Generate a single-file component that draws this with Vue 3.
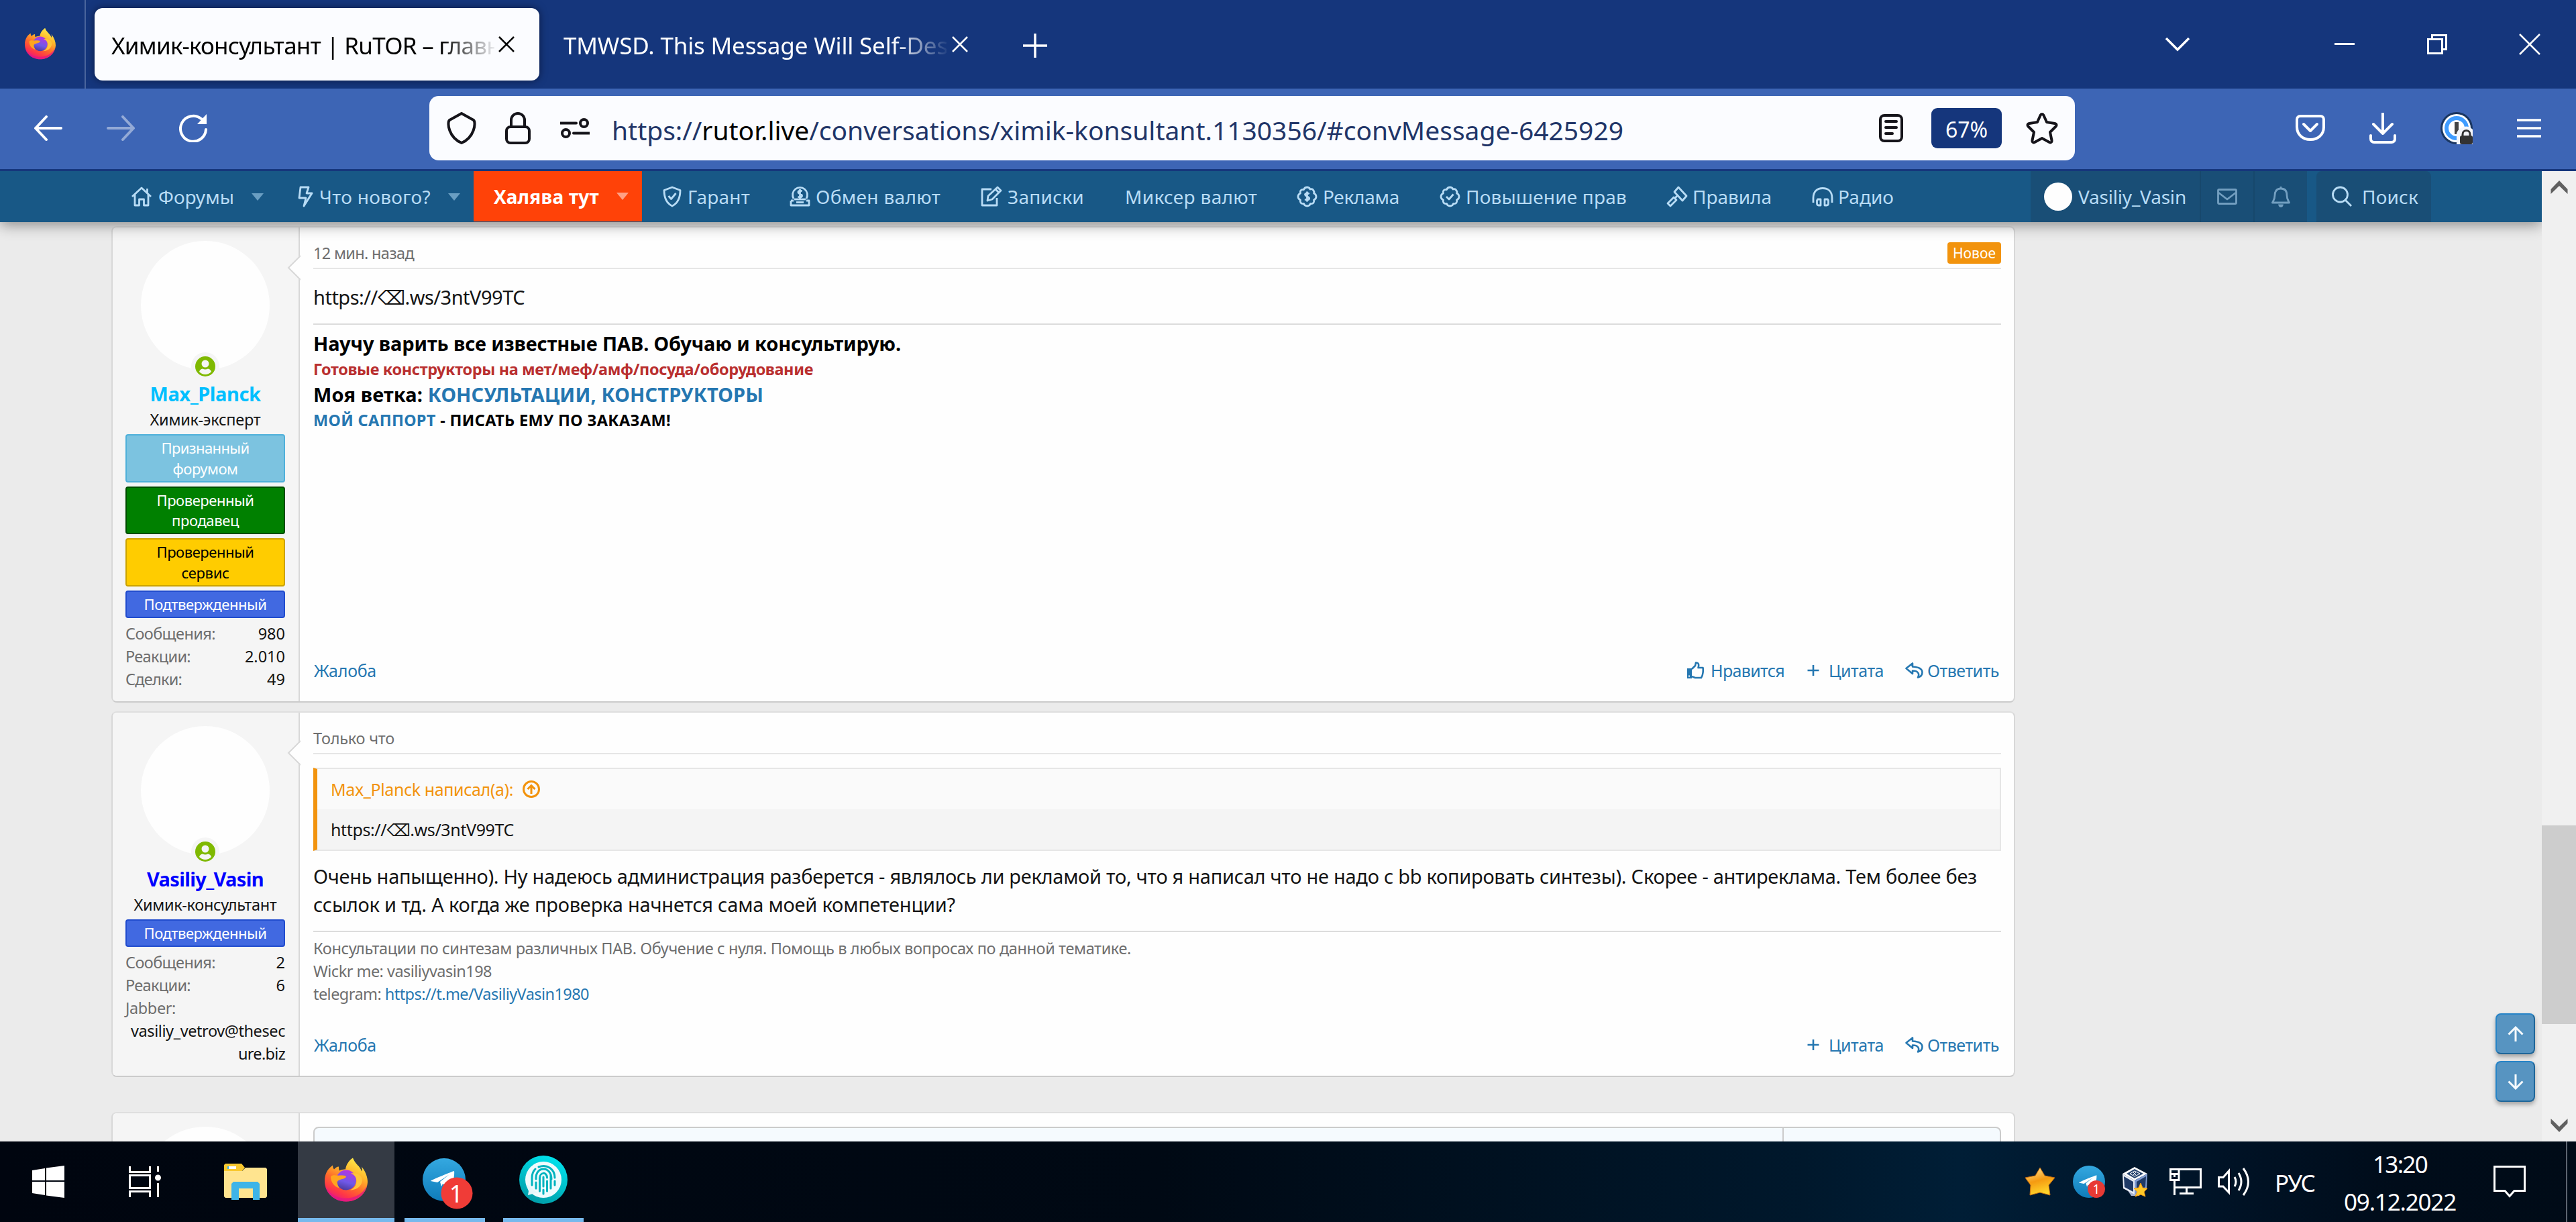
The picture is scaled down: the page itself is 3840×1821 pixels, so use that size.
<script setup>
import { ref } from 'vue'

// Подгоняем ширину надписи через межбуквенный интервал
const vFit = {
  mounted(el, { value }) {
    if (!value) return
    const natural = el.getBoundingClientRect().width
    el.style.letterSpacing = `${(value - natural) / el.textContent.length}px`
  }
}

const navIcons = {
  home: { w: 32, paths: ['M2 16 L16 3 L30 16', 'M6 13 V29 H12.500 V20 H19.500 V29 H26 V13', 'M24.500 4 V10'] },
  bolt: { w: 24, paths: ['M5 2 H17 L14 11 H22 L10 30 L13 18 H3 Z'] },
  shield: { w: 28, paths: ['M14 2 L26 6.500 C26 18 22 26 14 30 C6 26 2 18 2 6.500 Z', 'M8.500 15 L12.500 19.500 L19.500 11'] },
  exchange: { w: 31, paths: ['M6 19 A11 11 0 1 1 25 19', 'M7 20 H24', 'M2 22 V29 H29 V22 H25 M6 22 H2', 'M10 24.500 H21', 'M18.500 8 C15 6 12.500 8 13 10 C13.500 12.500 18 11.500 18.500 14 C19 17 15 18 12.500 16 M15.500 5 V19'] },
  edit: { w: 33, paths: ['M17 5 H3 V29 H25 V18', 'M12 15 L26 2 L31 7 L18 20 L11 22 Z', 'M23 5 L28 10'] },
  dollar: { w: 31, paths: ['M15.500 2 C18.500 2 19.500 4 20 5 C22 4 24 5 25 7 C26.300 8.500 26 10 25.500 11 C28 12 29 14 29 16 C29 18 28 20 25.500 21 C26.500 24 25 27 20.500 26.500 C19.500 29 18 30 15.500 30 C13 30 11.500 29 10.500 26.500 C6 27 4.500 24 5.500 21 C3 20 2 18 2 16 C2 14 3 12 5.500 11 C4.500 8 6 5 10.500 5.500 C11.500 3 13 2 15.500 2 Z', 'M18.700 12 C16 10 12.500 11 12.500 13.300 C13 16 18.700 15.500 18.700 18.700 C18.500 21 14.500 21.500 12.300 19.800 M15.500 8.500 V23.500'] },
  check: { w: 31, paths: ['M15.500 2 C18.500 2 19.500 4 20 5 C22 4 24 5 25 7 C26.300 8.500 26 10 25.500 11 C28 12 29 14 29 16 C29 18 28 20 25.500 21 C26.500 24 25 27 20.500 26.500 C19.500 29 18 30 15.500 30 C13 30 11.500 29 10.500 26.500 C6 27 4.500 24 5.500 21 C3 20 2 18 2 16 C2 14 3 12 5.500 11 C4.500 8 6 5 10.500 5.500 C11.500 3 13 2 15.500 2 Z', 'M10 16 L14 20 L20.500 12.500'] },
  gavel: { w: 32, paths: ['M18 2 L30 15 L24 22 L12 9 Z', 'M17 14 L13 18', 'M11 17 L15 21 L6 30 L2 26 Z'] },
  radio: { w: 32, paths: ['M2 25 V18 C2 8 8 3.500 16 3.500 C24 3.500 30 8 30 18 V25', 'M8.500 20 H13 V29 H10 C8.500 29 7.500 28 7.500 26 V22 Z', 'M23.500 20 H19 V29 H22 C23.500 29 24.500 28 24.500 26 V22 Z'] }
}

const navItems = [
  { text: 'Форумы', icon: 'home', width: 248, iconBox: 41, fit: 113, caret: true },
  { text: 'Что нового?', icon: 'bolt', width: 263, iconBox: 33, fit: 166, caret: true },
  { text: 'Халява тут', width: 251, fit: 157, caret: true, hot: true },
  { text: 'Гарант', icon: 'shield', width: 189, iconBox: 37, fit: 93 },
  { text: 'Обмен валют', icon: 'exchange', width: 284, iconBox: 39, fit: 186 },
  { text: 'Записки', icon: 'edit', width: 216, iconBox: 41, fit: 114 },
  { text: 'Миксер валют', width: 256, fit: 197 },
  { text: 'Реклама', icon: 'dollar', width: 213, iconBox: 39, fit: 114 },
  { text: 'Повышение прав', icon: 'check', width: 338, iconBox: 39, fit: 240 },
  { text: 'Правила', icon: 'gavel', width: 217, iconBox: 39, fit: 118 },
  { text: 'Радио', icon: 'radio', width: 160, iconBox: 39, fit: 83 }
]

const posts = ref([
  {
    id: 1,
    author: 'Max_Planck',
    authorFit: 165,
    authorClass: 'author-sky',
    role: 'Химик-эксперт',
    roleFit: 165,
    banners: [
      { lines: [['Признанный', 131], ['форумом', 97]], cls: 'banner-sky' },
      { lines: [['Проверенный', 145], ['продавец', 100]], cls: 'banner-green' },
      { lines: [['Проверенный', 145], ['сервис', 71]], cls: 'banner-yellow' },
      { lines: [['Подтвержденный', 183]], cls: 'banner-blue' }
    ],
    stats: [
      { label: 'Сообщения:', fit: 134, value: '980' },
      { label: 'Реакции:', fit: 97, value: '2.010' },
      { label: 'Сделки:', fit: 84, value: '49' }
    ],
    date: '12 мин. назад',
    dateFit: 150,
    isNew: true,
    canLike: true
  },
  {
    id: 2,
    author: 'Vasiliy_Vasin',
    authorFit: 174,
    authorClass: 'author-blue',
    role: 'Химик-консультант',
    roleFit: 213,
    banners: [{ lines: [['Подтвержденный', 183]], cls: 'banner-blue' }],
    stats: [
      { label: 'Сообщения:', fit: 134, value: '2' },
      { label: 'Реакции:', fit: 97, value: '6' }
    ],
    jabber: [['vasiliy_vetrov@thesec', 230], ['ure.biz', 70]],
    date: 'Только что',
    dateFit: 121,
    isNew: false,
    canLike: false
  }
])
</script>

<template>
  <div class="screen">
    <svg class="defs" width="0" height="0">
      <defs>
        <linearGradient id="foxBody" x1="0.8" y1="0" x2="0.3" y2="1">
          <stop offset="0" stop-color="#fff44f" />
          <stop offset="0.35" stop-color="#ffb42a" />
          <stop offset="0.6" stop-color="#ff6a2b" />
          <stop offset="0.82" stop-color="#ff3647" />
          <stop offset="1" stop-color="#e31587" />
        </linearGradient>
        <linearGradient id="foxGlobe" x1="0.7" y1="0" x2="0.4" y2="1">
          <stop offset="0" stop-color="#b833e1" />
          <stop offset="0.6" stop-color="#7059e8" />
          <stop offset="1" stop-color="#4b3a9e" />
        </linearGradient>
        <linearGradient id="tgBody" x1="0" y1="0" x2="0" y2="1">
          <stop offset="0" stop-color="#34a8e0" />
          <stop offset="1" stop-color="#0f7cba" />
        </linearGradient>
        <linearGradient id="printBody" x1="0.7" y1="0" x2="0.3" y2="1">
          <stop offset="0" stop-color="#00e4ee" />
          <stop offset="1" stop-color="#009ba6" />
        </linearGradient>
        <linearGradient id="starBody" x1="0" y1="0" x2="0.3" y2="1">
          <stop offset="0" stop-color="#ffe9a0" />
          <stop offset="0.55" stop-color="#f59a11" />
          <stop offset="1" stop-color="#ffd32a" />
        </linearGradient>
        <symbol id="firefox" viewBox="0 0 64 65">
          <path fill="url(#foxBody)" d="M42 0 C45 9 53 12 55 20 C56 18 56 16 55 13 C61 20 64 29 64 36 C63 53 49 65 32 65 C14 65 0 52 0 34 C0 26 3 17 12 11 C12 14 13 16 14 17 C16 15 18 13 21 13 C21 15 21 17 22 19 C26 17 29 17 31 17 C32 10 36 4 42 0 Z" />
          <path fill="#e31587" opacity="0.75" d="M1 42 C8 56 21 61 34 60 C48 59 59 51 63 41 C60 56 47 65 32 65 C16 65 4 55 1 42 Z" />
          <circle cx="32" cy="33" r="15" fill="url(#foxGlobe)" />
          <path fill="#ffa51e" d="M9 28 C12 24 18 27 23 26 C27 26 31 26 32 28 C30 32 24 31 20 34 C17 36 20 42 22 45 C14 43 9 36 9 28 Z" />
          <path fill="#ffc43a" d="M39 23 C45 25 49 31 47 38 C46 43 42 46 38 48 C46 48 55 43 56 34 C56 27 50 22 39 23 Z" />
        </symbol>
        <symbol id="telegram" viewBox="0 0 64 64">
          <circle cx="32" cy="32" r="32" fill="url(#tgBody)" />
          <path fill="#fff" d="M12 34 C11 33 46 19 47 19 C48 24 45 38 43 46 L30 38 L28 42 L26 35 L40 24 L22 36 Z" />
        </symbol>
      </defs>
    </svg>

    <!-- Вкладки -->
    <div class="tab-bar">
      <div class="pinned">
        <svg width="46" height="48"><use href="#firefox" /></svg>
      </div>
      <div class="tab tab-active">
        <div class="tab-title"><span v-fit="580" class="fit">Химик-консультант | RuTOR – главн</span></div>
        <svg class="tab-close" width="24" height="24" viewBox="0 0 24 24"><path d="M1 1 L23 23 M23 1 L1 23" /></svg>
      </div>
      <div class="tab">
        <div class="tab-title"><span v-fit="573" class="fit">TMWSD. This Message Will Self-Des</span></div>
        <svg class="tab-close" width="24" height="24" viewBox="0 0 24 24"><path d="M1 1 L23 23 M23 1 L1 23" /></svg>
      </div>
      <svg class="new-tab" width="36" height="36" viewBox="0 0 36 36"><path d="M18 0 V36 M0 18 H36" /></svg>
      <div class="window-buttons">
        <svg width="38" height="22" viewBox="0 0 38 22"><path d="M2 2 L19 19 L36 2" stroke-width="3.500" /></svg>
        <svg width="30" height="30" viewBox="0 0 30 30"><path d="M0 14.500 H30" stroke-width="3" /></svg>
        <svg width="30" height="30" viewBox="0 0 30 30"><path d="M1.500 7.500 H22.500 V28.500 H1.500 Z M7.500 7 V1.500 H28.500 V22.500 H23" stroke-width="3" /></svg>
        <svg width="32" height="32" viewBox="0 0 32 32"><path d="M1 1 L31 31 M31 1 L1 31" stroke-width="2.500" /></svg>
      </div>
    </div>

    <!-- Адресная строка -->
    <div class="toolbar">
      <svg width="42" height="38" viewBox="0 0 42 38"><path d="M2 19 H40 M18 2 L2 19 L18 36" /></svg>
      <svg class="muted" width="42" height="38" viewBox="0 0 42 38"><path d="M2 19 H40 M24 2 L40 19 L24 36" /></svg>
      <svg width="42" height="42" viewBox="0 0 42 42"><path d="M40 23 A19 19 0 1 1 33 7 L38 12" /><path class="solid" d="M41 0 V15 H27 Z" /></svg>
      <div class="url-bar">
        <svg width="44" height="48" viewBox="0 0 44 48"><path d="M22 2 L40 12 C44 16 41 38 22 46 C3 38 0 16 4 12 Z" /></svg>
        <svg width="38" height="48" viewBox="0 0 38 48"><rect x="2" y="22" width="34" height="24" rx="6" /><path d="M9 22 V12 A10 10 0 0 1 29 12 V22" /></svg>
        <svg width="44" height="32" viewBox="0 0 44 32"><path d="M0 8.500 H24 M20 23.500 H44" /><circle cx="35.500" cy="8.500" r="5.500" /><circle cx="8.500" cy="23.500" r="5.500" /></svg>
        <div class="url-text"><span v-fit="1508" class="fit">https://<b>rutor.live</b>/conversations/ximik-konsultant.1130356/#convMessage-6425929</span></div>
        <svg width="36" height="42" viewBox="0 0 36 42"><rect x="2" y="2" width="32" height="38" rx="6" /><path d="M10 11 H26 M10 20 H26 M10 29 H20" /></svg>
        <div class="zoom-badge"><span v-fit="63" class="fit">67%</span></div>
        <svg class="star" width="48" height="48" viewBox="0 0 48 48"><path d="M24 3 C25 3 26 4 26.500 5 L31 15 L43 17 C46 17.500 46 20 44.500 21.500 L36 30 L38.500 42 C39 45 37 46 35 45 L24 39 L13 45 C11 46 9 45 9.500 42 L12 30 L3.500 21.500 C2 20 2 17.500 5 17 L17 15 L21.500 5 C22 4 23 3 24 3 Z" /></svg>
      </div>
      <svg class="pocket" width="44" height="40" viewBox="0 0 44 40"><path d="M7 2 H37 C40 2 42 4 42 7 V18 C42 30 33 37 22 37 C11 37 2 30 2 18 V7 C2 4 4 2 7 2 Z M12 14 L22 24 L32 14" /></svg>
      <svg width="40" height="46" viewBox="0 0 40 46"><path d="M20 0 V31 M6 17 L20 31 L34 17 M2 34 V39 C2 42 4 44 7 44 H33 C36 44 38 42 38 39 V34" /></svg>
      <svg width="48" height="48" viewBox="0 0 48 48">
        <circle cx="24" cy="24" r="24" fill="#1a3660" stroke="none" />
        <circle cx="24" cy="24" r="21" fill="#fff" stroke="none" />
        <circle cx="24" cy="24" r="15" fill="#fff" stroke="#3f9cff" stroke-width="6" />
        <rect x="21" y="15" width="6" height="18" fill="#444" stroke="none" />
        <path d="M24 48 V33 Q24 28 30 24 Q40 18 48 26 V48 Z" fill="#f4f6fb" stroke="none" />
        <rect x="29" y="35" width="19" height="13" rx="3" fill="#333" stroke="none" />
        <path d="M33 36 V33 A5.500 5.500 0 0 1 44 33 V36" stroke="#333" stroke-width="3" />
      </svg>
      <svg width="36" height="28" viewBox="0 0 36 28"><path d="M0 2 H36 M0 14 H36 M0 26 H36" stroke-width="3.500" /></svg>
    </div>

    <!-- Страница -->
    <div class="viewport">
      <div class="page">
        <nav class="nav">
          <div
              v-for="item in navItems"
              :key="item.text"
              class="nav-item"
              :class="{ hot: item.hot }"
              :style="{ width: item.width + 'px' }"
          >
            <span v-if="item.icon" class="nav-icon" :style="{ width: item.iconBox + 'px' }">
              <svg :width="navIcons[item.icon].w" height="32" :viewBox="`0 0 ${navIcons[item.icon].w} 32`">
                <path v-for="d in navIcons[item.icon].paths" :key="d" :d="d" />
              </svg>
            </span>
            <span v-fit="item.fit" class="fit">{{ item.text }}</span>
            <i v-if="item.caret" class="caret"></i>
          </div>
          <div class="visitor">
            <div class="visitor-user"><i class="visitor-avatar"></i><span v-fit="161" class="fit">Vasiliy_Vasin</span></div>
            <div class="visitor-icon">
              <svg width="30" height="24" viewBox="0 0 30 24"><path d="M3 1.500 H27 Q28.500 1.500 28.500 3 V21 Q28.500 22.500 27 22.500 H3 Q1.500 22.500 1.500 21 V3 Q1.500 1.500 3 1.500 Z M2 6 L15 16 L28 6" /></svg>
            </div>
            <div class="visitor-icon">
              <svg width="28" height="32" viewBox="0 0 28 32"><path d="M14 1 V4 M14 4 C7 4 5 9 5 14 C5 20 3 22 1.500 25 H26.500 C25 22 23 20 23 14 C23 9 21 4 14 4 Z" /><path class="solid" d="M10 27.500 H18 Q17 32 14 32 Q11 32 10 27.500 Z" /></svg>
            </div>
          </div>
          <div class="search">
            <svg width="31" height="32" viewBox="0 0 31 32"><circle cx="12.500" cy="13" r="11" /><path d="M20 21 L29 30" /></svg>
            <span v-fit="84" class="fit">Поиск</span>
          </div>
        </nav>

        <div class="posts">
          <article v-for="post in posts" :key="post.id" class="post" :class="'post-' + post.id">
            <aside class="user-cell">
              <div class="avatar">
                <svg class="online" width="42" height="42" viewBox="0 0 42 42">
                  <circle cx="21" cy="21" r="21" fill="#f5f5f5" />
                  <circle cx="21" cy="21" r="15" fill="#7fb900" />
                  <circle cx="21" cy="17" r="5.500" fill="#f5f5f5" />
                  <path d="M12 29 Q13 25 17 24.500 Q21 26.500 25 24.500 Q29 25 30 29 Q26 33 21 33 Q16 33 12 29 Z" fill="#f5f5f5" />
                </svg>
              </div>
              <h4 class="author" :class="post.authorClass"><span v-fit="post.authorFit" class="fit">{{ post.author }}</span></h4>
              <div class="role"><span v-fit="post.roleFit" class="fit">{{ post.role }}</span></div>
              <div class="banners">
                <div v-for="(banner, i) in post.banners" :key="i" class="banner" :class="banner.cls">
                  <div v-for="line in banner.lines" :key="line[0]"><span v-fit="line[1]" class="fit">{{ line[0] }}</span></div>
                </div>
              </div>
              <dl class="stats">
                <div v-for="stat in post.stats" :key="stat.label" class="stat">
                  <dt><span v-fit="stat.fit" class="fit">{{ stat.label }}</span></dt>
                  <dd>{{ stat.value }}</dd>
                </div>
                <template v-if="post.jabber">
                  <div class="stat"><dt><span v-fit="75" class="fit">Jabber:</span></dt></div>
                  <div v-for="part in post.jabber" :key="part[0]" class="stat stat-right">
                    <dd><span v-fit="part[1]" class="fit">{{ part[0] }}</span></dd>
                  </div>
                </template>
              </dl>
            </aside>

            <div class="main-cell">
              <svg class="arrow" width="21" height="40" viewBox="0 0 21 40"><path d="M21 2 L3 20 L21 38" fill="#fefefe" stroke="#d8d8d8" stroke-width="2" /></svg>
              <header class="post-head">
                <span v-fit="post.dateFit" class="fit">{{ post.date }}</span>
                <span v-if="post.isNew" class="new-label"><span v-fit="64" class="fit">Новое</span></span>
              </header>

              <template v-if="post.id === 1">
                <div class="body first"><span v-fit="315" class="fit">https://⌫.ws/3ntV99TC</span></div>
                <div class="signature bold-sign">
                  <div class="big"><span v-fit="876" class="fit">Научу варить все известные ПАВ. Обучаю и консультирую.</span></div>
                  <div class="small red"><span v-fit="745" class="fit">Готовые конструкторы на мет/меф/амф/посуда/оборудование</span></div>
                  <div class="big"><span v-fit="671" class="fit">Моя ветка: <span class="link">КОНСУЛЬТАЦИИ, КОНСТРУКТОРЫ</span></span></div>
                  <div class="small"><span v-fit="533" class="fit"><span class="link">МОЙ САППОРТ</span> - ПИСАТЬ ЕМУ ПО ЗАКАЗАМ!</span></div>
                </div>
              </template>

              <template v-else>
                <blockquote class="quote">
                  <div class="quote-title">
                    <span v-fit="272" class="fit">Max_Planck написал(а):</span>
                    <svg width="26" height="26" viewBox="0 0 26 26"><circle cx="13" cy="13" r="11.500" /><path d="M13 20 V7.500 M7.500 13 L13 7.500 L18.500 13" /></svg>
                  </div>
                  <div class="quote-body"><span v-fit="273" class="fit">https://⌫.ws/3ntV99TC</span></div>
                </blockquote>
                <div class="body">
                  <div><span v-fit="2480" class="fit">Очень напыщенно). Ну надеюсь администрация разберется - являлось ли рекламой то, что я написал что не надо с bb копировать синтезы). Скорее - антиреклама. Тем более без</span></div>
                  <div><span v-fit="957" class="fit">ссылок и тд. А когда же проверка начнется сама моей компетенции?</span></div>
                </div>
                <div class="signature">
                  <div class="small"><span v-fit="1219" class="fit">Консультации по синтезам различных ПАВ. Обучение с нуля. Помощь в любых вопросах по данной тематике.</span></div>
                  <div class="small"><span v-fit="266" class="fit">Wickr me: vasiliyvasin198</span></div>
                  <div class="small"><span v-fit="411" class="fit">telegram: <span class="link">https://t.me/VasiliyVasin1980</span></span></div>
                </div>
              </template>

              <footer class="post-foot">
                <span v-fit="93" class="fit report">Жалоба</span>
                <span v-if="post.canLike" class="action like">
                  <svg width="25" height="26" viewBox="0 0 25 26"><path d="M7 11 L12 6 L13 1.500 C17 1 18 4 16.500 9 H23.500 C24 12 24 20 21 24 H12 L7 22" /><path class="solid" fill-rule="evenodd" d="M0 10 H7 V25 H0 Z M2 20.500 H4 V22.500 H2 Z" /></svg>
                  <span v-fit="110" class="fit">Нравится</span>
                </span>
                <span class="action cite">
                  <svg width="18" height="18" viewBox="0 0 18 18"><path d="M9 1 V17 M0.500 9 H17.500" /></svg>
                  <span v-fit="82" class="fit">Цитата</span>
                </span>
                <span class="action reply">
                  <svg width="27" height="24" viewBox="0 0 27 24"><path d="M1.500 9 L11 1.500 V6.500 C21 7 25.500 10 25.500 15 C25.500 19 23 21.500 19 22.500 C22 17 19 12.500 11 12.500 V17 Z" /></svg>
                  <span v-fit="107" class="fit">Ответить</span>
                </span>
              </footer>
            </div>
          </article>

          <article class="post post-reply">
            <aside class="user-cell"><div class="avatar"></div></aside>
            <div class="main-cell">
              <div class="editor"><div class="editor-tools"></div><div class="editor-side"></div></div>
            </div>
          </article>
        </div>

        <div class="scroll-buttons">
          <div class="scroll-button"><svg width="24" height="24" viewBox="0 0 24 24"><path d="M12 23 V2 M1.500 12.500 L12 2 L22.500 12.500" /></svg></div>
          <div class="scroll-button"><svg width="24" height="24" viewBox="0 0 24 24"><path d="M12 1 V22 M1.500 11.500 L12 22 L22.500 11.500" /></svg></div>
        </div>
      </div>

      <div class="scrollbar">
        <svg width="26" height="21" viewBox="0 0 26 21"><path d="M0.500 20 V13 L13 0 L25.500 13 V20 L13 8 Z" /></svg>
        <div class="thumb"></div>
        <svg width="26" height="21" viewBox="0 0 26 21"><path d="M0.500 1 V8 L13 21 L25.500 8 V1 L13 13 Z" /></svg>
      </div>
    </div>

    <!-- Панель задач -->
    <div class="taskbar">
      <div class="task">
        <svg width="48" height="48" viewBox="0 0 48 48"><path fill="#fff" d="M0 7 L19 4 V22 H0 Z M21 3.500 L48 0 V22 H21 Z M0 24 H19 V44 L0 41 Z M21 24 H48 V48 L21 44.500 Z" /></svg>
      </div>
      <div class="task">
        <svg width="48" height="46" viewBox="0 0 48 46"><path fill="none" stroke="#fff" stroke-width="3" d="M1.500 0 V8.500 H31.500 V0 M1.500 13.500 H31.500 V32.500 H1.500 Z M1.500 46 V37.500 H31.500 V46 M43.500 0 V8 M43.500 25 V46" /><circle cx="43.500" cy="17" r="4.500" fill="#fff" /></svg>
      </div>
      <div class="task">
        <svg width="64" height="54" viewBox="0 0 64 54"><path fill="#f9c82f" d="M2 0 H26 L31 6 L26 12 H0 V2 Z" /><path fill="#ffe48f" d="M0 11 H27 L32 6 H62 L64 8 V49 L62 51 H2 L0 49 Z" /><path fill="#fff" d="M5 4 H18 V8 H5 Z" /><path fill="#3db4e8" d="M5 4 H7 V8 H5 Z M14 27 H50 L53 30 V54 H43 V37 H22 V54 H11 V30 Z" /></svg>
      </div>
      <div class="task active">
        <svg width="64" height="66"><use href="#firefox" /></svg>
      </div>
      <div class="task running">
        <svg class="tg" width="76" height="78" viewBox="0 0 76 78"><use href="#telegram" width="64" height="64" /><circle cx="51" cy="52" r="23.500" fill="#f03c37" /><text x="50" y="66" text-anchor="middle" fill="#fff" font-size="36">1</text></svg>
      </div>
      <div class="task running">
        <svg width="72" height="72" viewBox="0 0 72 72">
          <circle cx="36" cy="36" r="36" fill="url(#printBody)" />
          <circle cx="36" cy="36" r="27" fill="#f0fbfd" />
          <path fill="#e6f7fb" d="M10 42 L14 53 L13 59 L27 55 Z" />
          <path fill="none" stroke="#00b3bf" stroke-width="3" stroke-linecap="round" d="M29 17 C41 12 53 20 53 33 M19 44 V33 C19 28 20 24 24 20 M25 35 C24 15 48 15 48 35 M25 40 V49 M30.500 53 V34 C30.500 24 41.500 24 41.500 33 M36 32 V46 M36 51 V57 M41.500 38 V53 M47 28 V49 M53 38 V44" />
        </svg>
      </div>
      <div class="tray">
        <svg class="tray-star" width="46" height="44" viewBox="0 0 46 44"><path fill="url(#starBody)" stroke="#c9700f" stroke-width="1" stroke-linejoin="round" d="M23 1 L30 13 L45 16 L36 27 L38 42 L23 38 L8 42 L9 27 L1 16 L16 13 Z" /></svg>
        <svg class="tray-tg" width="48" height="48" viewBox="0 0 48 48"><use href="#telegram" width="48" height="48" /><circle cx="35" cy="35" r="13" fill="#e83a35" /><text x="35" y="42" text-anchor="middle" fill="#fff" font-size="19">1</text></svg>
        <svg class="tray-vb" width="39" height="45" viewBox="0 0 39 45">
          <path fill="#aab4cf" d="M8 34 H30 L26 43 H14 Z" />
          <path fill="#fff" d="M19 0 L38 10 L19 20 L1 10 Z" />
          <path fill="#28456f" d="M19 3 L32 10 L19 17 L7 10 Z" />
          <path fill="none" stroke="#fff" stroke-width="1" d="M19 6 L27 10 L19 14 L12 10 Z M17 8 L21 12 M21 8 L17 12" />
          <path fill="#e8ecf5" d="M1 10 L19 20 V41 L2 32 Z" />
          <path fill="#1f3a66" d="M3 14 L17 22 V37 L4 30 Z" />
          <path fill="#7f9bd1" d="M38 10 L19 20 V41 L37 32 Z" />
          <path fill="#1f3a66" d="M36 14 L22 22 V37 L35 30 Z" />
          <path fill="#ffc928" stroke="#f59a11" stroke-width="1" d="M28 24 L31 31 L38 32 L33 37 L35 44 L28 41 L20 44 L23 37 L18 32 L25 31 Z" />
        </svg>
        <svg class="tray-net" width="48" height="40" viewBox="0 0 48 40"><path fill="none" stroke="#fff" stroke-width="3" d="M14 1.500 H46.500 V28.500 H7 M1.500 1.500 H14 V17.500 H1.500 Z M7.500 18 V40 M1.500 8.500 H14 M25.500 29 V37 M15 37.500 H36 M7.500 8 V13" /></svg>
        <svg class="tray-vol" width="49" height="42" viewBox="0 0 49 42"><path fill="none" stroke="#fff" stroke-width="3" d="M1.500 14.500 H8 L16.500 5 V37 L8 28 H1.500 Z M25 14 Q29 21 25 28 M31 8 Q39 21 31 34 M38 1 Q53 21 38 41" /></svg>
        <span v-fit="60" class="fit lang">РУС</span>
        <div class="clock">
          <div><span v-fit="81" class="fit">13:20</span></div>
          <div><span v-fit="167" class="fit">09.12.2022</span></div>
        </div>
        <svg class="tray-note" width="48" height="48" viewBox="0 0 48 48"><path fill="none" stroke="#fff" stroke-width="3" d="M1.500 1.500 H46.500 V37.500 H31 L24 45.500 L17 37.500 H1.500 Z" /></svg>
        <i class="peek"></i>
      </div>
    </div>
  </div>
</template>

<style>
body {
  margin: 0;
  overflow: hidden;
}
</style>

<style scoped>
.screen {
  width: 3840px;
  height: 1821px;
  display: flex;
  flex-direction: column;
  overflow: hidden;
  font-family: "Noto Sans", "Open Sans", "DejaVu Sans", sans-serif;
  color: #141414;
}

.screen * {
  box-sizing: border-box;
}

svg {
  display: block;
  flex: none;
}

.defs {
  position: absolute;
}

.fit {
  display: inline-block;
  white-space: pre;
}

/* tabs */
.tab-bar {
  display: flex;
  align-items: center;
  flex: none;
  height: 132px;
  background: #15367c;
  color: #fff;
}

.pinned {
  width: 128px;
  height: 132px;
  padding: 41px 0 0 37px;
  border-right: 2px solid #4a659c;
}

.tab {
  display: flex;
  align-items: center;
  width: 663px;
  height: 108px;
  padding-left: 25px;
  border-radius: 12px;
}

.tab-active {
  margin-left: 13px;
  background: #fbfcff;
  color: #000;
  box-shadow: 0 0 12px rgba(0, 0, 20, 0.55);
}

.tab + .tab {
  margin-left: 12px;
  padding-left: 24px;
}

.tab-title {
  width: 571px;
  height: 60px;
  margin-top: 3px;
  overflow: hidden;
  font-size: 35px;
  line-height: 60px;
  mask-image: linear-gradient(to right, #000 86%, transparent 101%);
}

.tab-close {
  margin-left: 6px;
  fill: none;
  stroke: currentColor;
  stroke-width: 2.5;
}

.tab + .tab .tab-close {
  margin-left: 8px;
}

.new-tab {
  margin: 4px 0 0 46px;
  stroke: #fff;
  stroke-width: 3.5;
}

.window-buttons {
  display: flex;
  align-items: center;
  margin-left: auto;
  padding-right: 53px;
  fill: none;
  stroke: #fff;
}

.window-buttons svg:nth-child(2) {
  margin-left: 215px;
}

.window-buttons svg:nth-child(3) {
  margin-left: 108px;
}

.window-buttons svg:nth-child(4) {
  margin-left: 107px;
}

/* toolbar */
.toolbar {
  display: flex;
  align-items: center;
  flex: none;
  gap: 66px;
  height: 123px;
  padding: 0 0 2px 51px;
  border-bottom: 3px solid #15367c;
  background: #3d65b5;
  fill: none;
  stroke: #fff;
  stroke-width: 4;
  stroke-linecap: round;
  stroke-linejoin: round;
}

.muted {
  opacity: 0.45;
}

.solid {
  fill: currentColor;
  stroke: none;
}

.toolbar .solid {
  fill: #fff;
}

.url-bar {
  display: flex;
  align-items: center;
  flex: none;
  width: 2453px;
  height: 96px;
  margin-left: 265px;
  padding-left: 26px;
  border-radius: 14px;
  background: #fbfcff;
  stroke: #15141a;
}

.url-bar svg:nth-child(2) {
  margin-left: 43px;
}

.url-bar svg:nth-child(3) {
  margin-left: 44px;
}

.url-text {
  width: 1889px;
  margin-left: 33px;
  padding-top: 5px;
  font-size: 39px;
  line-height: 60px;
  color: #213568;
}

.url-text b {
  font-weight: 400;
  color: #000;
}

.zoom-badge {
  width: 105px;
  height: 60px;
  margin: 0 36px 0 42px;
  padding-top: 3px;
  border-radius: 9px;
  background: #15367c;
  color: #fbfcff;
  font-size: 32px;
  line-height: 58px;
  text-align: center;
}

.pocket {
  margin-left: 263px;
}

/* page */
.viewport {
  display: flex;
  flex: none;
  height: 1446px;
}

.page {
  position: relative;
  width: 3789px;
  height: 1446px;
  overflow: hidden;
  background: #ebebeb;
}

.nav {
  position: relative;
  z-index: 2;
  display: flex;
  height: 76px;
  padding-left: 195px;
  background: #185886;
  box-shadow: 0 4px 20px rgba(0, 0, 0, 0.42);
  color: #b8dcf5;
  font-size: 28px;
}

.nav svg {
  fill: none;
  stroke: currentColor;
  stroke-width: 2.8;
  stroke-linejoin: round;
}

.nav svg .solid {
  fill: currentColor;
  stroke: none;
}

.nav-item {
  display: flex;
  align-items: center;
  flex: none;
}

.nav-icon {
  flex: none;
}

.caret {
  margin-left: 26px;
  border: 9px solid transparent;
  border-top: 11px solid #6a9ec2;
  border-bottom: 0;
}

.hot {
  height: 75px;
  margin-right: 31px;
  padding-left: 30px;
  background: #ff4208;
  color: #fff;
  font-weight: 700;
}

.hot .caret {
  border-top-color: #ffa084;
}

.visitor {
  display: flex;
  margin-left: 166px;
  background: #194e76;
}

.visitor-user {
  display: flex;
  align-items: center;
  gap: 9px;
  width: 252px;
  padding-left: 20px;
}

.visitor-avatar {
  width: 42px;
  height: 42px;
  border-radius: 50%;
  background: #fefefe;
}

.visitor-icon {
  display: flex;
  align-items: center;
  justify-content: center;
  width: 80px;
  border-left: 2px solid #17486c;
  color: #739fc0;
}

.search {
  display: flex;
  align-items: center;
  gap: 14px;
  width: 171px;
  margin-left: 14px;
  padding-left: 23px;
  border-radius: 8px 8px 0 0;
  background: #194e76;
}

.posts {
  width: 2838px;
  margin: 6px 0 0 166px;
}

.post {
  display: flex;
  margin-bottom: 13px;
  border: 2px solid #d8d8d8;
  border-top-color: #dfdfdf;
  border-bottom-color: #cbcbcb;
  border-radius: 8px;
  background: #fefefe;
}

.post-1 {
  height: 710px;
}

.post-2 {
  height: 545px;
  margin-bottom: 52px;
}

.user-cell {
  width: 279px;
  flex: none;
  padding: 20px 20px 0 19px;
  border-right: 2px solid #d8d8d8;
  border-radius: 6px 0 0 6px;
  background: #f5f5f5;
  text-align: center;
}

.avatar {
  position: relative;
  width: 192px;
  height: 192px;
  margin: 0 auto 15px 23px;
  border-radius: 50%;
  background: #fefefe;
}

.online {
  position: absolute;
  left: 75px;
  top: 166px;
}

.author {
  margin: 0;
  font-size: 29px;
  line-height: 42px;
}

.author-sky {
  color: #00bfff;
}

.author-blue {
  color: #0000ff;
}

.role {
  font-size: 23.5px;
  line-height: 34px;
}

.banners {
  display: flex;
  flex-direction: column;
  gap: 6px;
  margin-top: 5px;
}

.banner {
  padding: 3px 0;
  border: 2px solid;
  border-radius: 4px;
  font-size: 22px;
  line-height: 30.8px;
}

.banner-sky {
  border-color: #4fb0da;
  background: #7cc3e0;
  color: #fff;
}

.banner-green {
  border-color: #004d00;
  background: #008000;
  color: #fff;
}

.banner-yellow {
  border-color: #cca300;
  background: #ffcc00;
  color: #000;
}

.banner-blue {
  border-color: #214cce;
  background: #4169e1;
  color: #fff;
}

.stats {
  margin: 6px 0 0;
  font-size: 23.5px;
  line-height: 34px;
}

.stat {
  display: flex;
  justify-content: space-between;
}

.stat-right {
  justify-content: flex-end;
}

.stat dt {
  color: #6e6e6e;
}

.stat dd {
  margin: 0;
}

.main-cell {
  position: relative;
  display: flex;
  flex-direction: column;
  flex: 1;
  padding: 21px 19px 28px 20px;
}

.arrow {
  position: absolute;
  left: -20px;
  top: 40px;
}

.post-head {
  display: flex;
  justify-content: space-between;
  height: 41px;
  border-bottom: 2px solid #e6e6e6;
  color: #6e6e6e;
  font-size: 23.5px;
  line-height: 34px;
}

.new-label {
  width: 80px;
  height: 32px;
  margin-top: 1px;
  border-radius: 4px;
  background: #f2930d;
  color: #fff;
  font-size: 21px;
  line-height: 32px;
  text-align: center;
}

.body {
  margin-top: 17px;
  font-size: 29px;
  line-height: 42px;
}

.body.first {
  margin-top: 21px;
}

.signature {
  margin-top: 18px;
  padding-top: 7px;
  border-top: 2px solid #dcdcdc;
  color: #6e6e6e;
}

.signature .small {
  font-size: 23.5px;
  line-height: 34px;
}

.signature .big {
  font-size: 29px;
  line-height: 42px;
}

.bold-sign {
  color: #000;
  font-weight: 700;
}

.bold-sign .red {
  color: #b92f2f;
}

.link {
  color: #2577b1;
}

.quote {
  height: 124px;
  margin: 20px 0 0;
  border: 2px solid #e6e6e6;
  border-left: 6px solid #f2930d;
  background: #f4f4f4;
  font-size: 25px;
  line-height: 60px;
}

.quote-title {
  display: flex;
  align-items: center;
  gap: 14px;
  padding-left: 20px;
  background: #fafafa;
  color: #f2930d;
}

.quote-title svg {
  fill: none;
  stroke: #f2930d;
  stroke-width: 3;
}

.quote-body {
  padding-left: 20px;
}

.post-foot {
  display: flex;
  align-items: center;
  height: 36px;
  margin-top: auto;
  padding-right: 3px;
  color: #2577b1;
  font-size: 25px;
  line-height: 36px;
}

.report {
  margin-left: 1px;
  margin-right: auto;
}

.action {
  display: flex;
  align-items: center;
  gap: 10px;
}

.action svg {
  fill: none;
  stroke: #2577b1;
  stroke-width: 2.6;
  stroke-linejoin: round;
}

.action svg .solid {
  fill: #2577b1;
  stroke: none;
}

.cite {
  gap: 14px;
  margin-left: 34px;
}

.reply {
  gap: 6px;
  margin-left: 32px;
}

.post-reply {
  height: 200px;
}

.post-reply .main-cell {
  padding-top: 20px;
}

.editor {
  display: flex;
  height: 150px;
  border: 2px solid #cbcbcb;
  border-radius: 8px;
  background: #f5fafe;
}

.editor-tools {
  width: 2190px;
  border-right: 2px solid #cbcbcb;
}

.scroll-buttons {
  position: absolute;
  left: 3720px;
  top: 1255px;
  display: flex;
  flex-direction: column;
  gap: 10px;
}

.scroll-button {
  display: flex;
  align-items: center;
  justify-content: center;
  width: 59px;
  height: 61px;
  border: 2px solid #2784c7;
  border-right-color: #1f6699;
  border-bottom-color: #1f6699;
  border-radius: 8px;
  background: #5794c1;
  box-shadow: 0 4px 6px rgba(0, 0, 0, 0.3);
}

.scroll-button svg {
  fill: none;
  stroke: #f5fafe;
  stroke-width: 3;
}

.scrollbar {
  display: flex;
  flex-direction: column;
  justify-content: space-between;
  align-items: center;
  width: 51px;
  padding: 14px 0;
  background: #f0f0f0;
  fill: #606060;
}

.thumb {
  width: 51px;
  height: 297px;
  margin: 940px 0 140px;
  background: #cdcdcd;
}

/* taskbar */
.taskbar {
  display: flex;
  flex: none;
  height: 120px;
  background: linear-gradient(to right, #00050f 0%, #000914 45%, #00182c 70%, #001e36 76%, #00152a 84%, #000c1a 93%, #000b17 100%);
}

.task {
  display: flex;
  align-items: center;
  justify-content: center;
  width: 144px;
  height: 120px;
  margin-right: 5px;
}

.task:nth-child(1) {
  margin: 0;
}

.task:nth-child(2) {
  margin: 0;
}

.task:nth-child(3) {
  width: 156px;
  margin: 0;
  padding-right: -6px;
}

.active {
  margin: 0 15px 0 0;
  border-bottom: 6px solid #76b9ed;
  background: #343a44;
}

.task.running {
  width: 120px;
  margin-right: 27px;
  border-bottom: 6px solid #76b9ed;
}

.tg {
  margin-left: 10px;
  margin-top: 13px;
}

.tray {
  display: flex;
  align-items: center;
  margin-left: auto;
  color: #fff;
  font-size: 35px;
}

.tray-tg {
  margin-left: 26px;
}

.tray-vb {
  margin-left: 25px;
}

.tray-net {
  margin-left: 32px;
}

.tray-vol {
  margin-left: 24px;
}

.lang {
  margin: 3px 0 0 36px;
}

.clock {
  width: 167px;
  margin-left: 43px;
  padding-top: 3px;
  line-height: 56px;
  text-align: center;
}

.tray-note {
  margin-left: 56px;
}

.peek {
  width: 15px;
  height: 120px;
  margin-left: 60px;
  border-left: 2px solid #5c6570;
}
</style>
